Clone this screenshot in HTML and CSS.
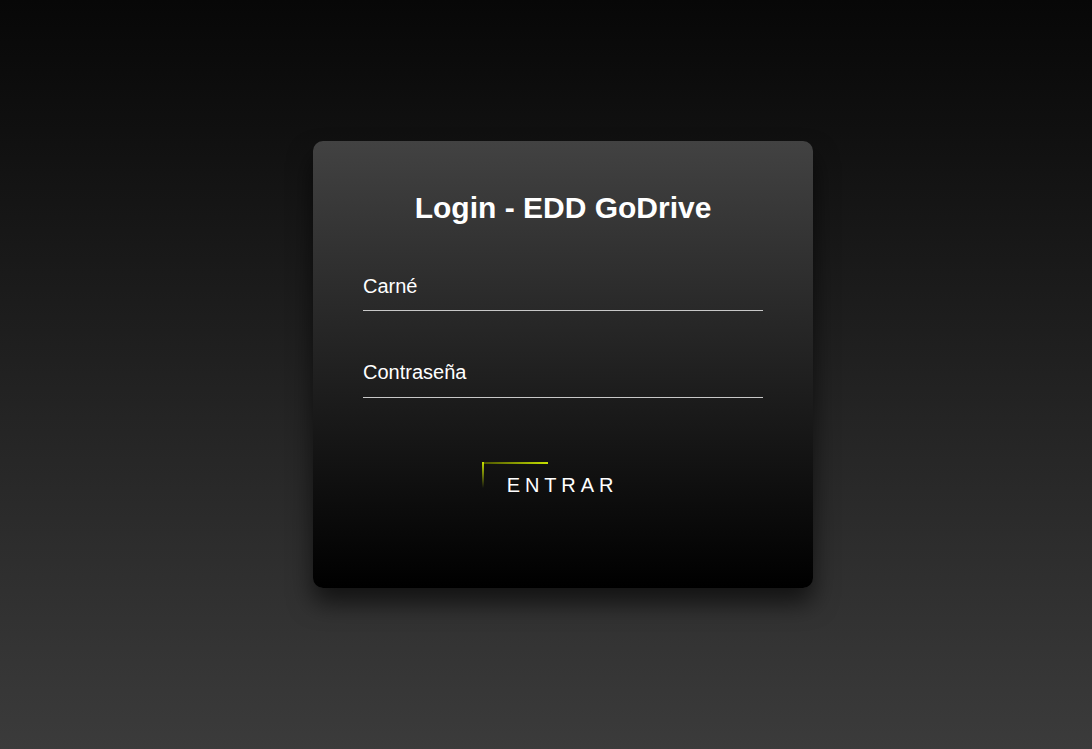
FILE: index.html
```html
<!DOCTYPE html>
<html lang="es">
<head>
<meta charset="utf-8">
<title>Login - EDD GoDrive</title>
<link rel="stylesheet" href="styles.css">
</head>
<body>
  <div class="login-box">
    <h2 class="title">Login - EDD GoDrive</h2>
    <form class="form">
      <div class="field"><span class="label">Carné</span></div>
      <div class="field"><span class="label">Contraseña</span></div>
      <div class="actions">
        <a class="btn" href="#">
          <span class="edge edge-top"></span>
          <span class="edge edge-left"></span>
          Entrar
        </a>
      </div>
    </form>
  </div>
</body>
</html>
```
FILE: styles.css
```css
html, body {
  margin: 0;
  padding: 0;
  height: 100%;
}
body {
  background: linear-gradient(to bottom, #070707, #3b3b3b);
  font-family: "Liberation Sans", Arial, sans-serif;
  display: flex;
  flex-direction: column;
  align-items: center;
  padding-top: 141px;
  padding-left: 34px;
  box-sizing: border-box;
}
.login-box {
  width: 500px;
  height: 447px;
  box-sizing: border-box;
  padding: 50px 50px;
  border-radius: 10px;
  background: linear-gradient(to bottom, #424242, #000000);
  box-shadow: 0 15px 25px rgba(0, 0, 0, 0.6);
}
.title {
  margin: 0 0 40px;
  font-size: 30px;
  line-height: 34px;
  font-weight: bold;
  color: #fff;
  text-align: center;
}
.form {
  display: flex;
  flex-direction: column;
}
.field {
  padding: 10px 0 12px;
  border-bottom: 1px solid #c8c8c8;
  margin-bottom: 41px;
  font-size: 20px;
  line-height: 23px;
  color: #fff;
}
.field + .field {
  padding-top: 9px;
  padding-bottom: 13px;
}
.actions {
  display: flex;
  justify-content: center;
  margin-top: 23px;
}
.btn {
  position: relative;
  display: inline-block;
  padding: 12px 26px 12px 25px;
  font-size: 20px;
  line-height: 23px;
  letter-spacing: 4.9px;
  text-transform: uppercase;
  text-decoration: none;
  color: #fff;
}
.edge {
  position: absolute;
  display: block;
}
.edge-top {
  top: 0;
  left: 0;
  width: 66px;
  height: 2px;
  background: linear-gradient(90deg, #4a5200, #c6e000);
}
.edge-left {
  top: 0;
  left: 0;
  width: 2px;
  height: 26px;
  background: linear-gradient(180deg, #c6e000, rgba(198, 224, 0, 0));
}
```
